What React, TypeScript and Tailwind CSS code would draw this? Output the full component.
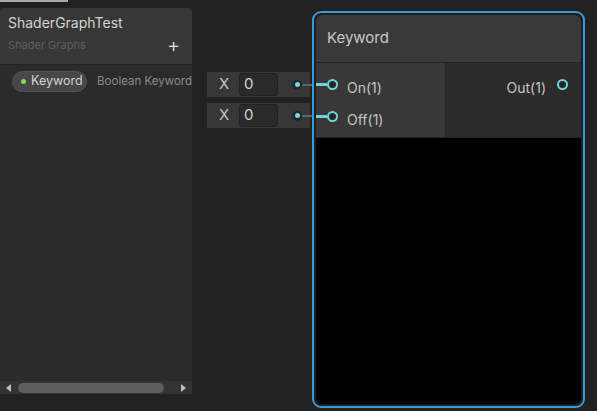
const font = { fontFamily: "Inter, 'Noto Sans', sans-serif" };

function InputRow() {
  return (
    <div className="flex items-center">
      <div className="flex h-[25px] w-[103px] items-center bg-[#373737]">
        <span className="ml-[10px] w-[14px] text-center text-[15px] text-[#c4c4c4]">X</span>
        <div className="ml-[8px] flex h-[23px] w-[39px] items-center rounded-[3px] border border-[#212121] bg-[#2a2a2a] pl-[4px] text-[15px] text-[#d2d2d2]">
          0
        </div>
        <div className="flex-1" />
        <div className="flex h-[10px] w-[10px] items-center justify-center rounded-full bg-[#262626]">
          <div className="h-[5px] w-[5px] rounded-full bg-[#6fd8e0]" />
        </div>
        <div className="h-[2px] w-[8px] bg-[#4b6b6e]" />
      </div>
      <div className="h-[2px] w-[2px] bg-[#4b6b6e]" />
    </div>
  );
}

function Port() {
  return <div className="h-[11px] w-[11px] rounded-full border-2 border-[#6fd3dc] bg-[#262626]" />;
}

function InPort({ label }: { label: string }) {
  return (
    <div className="flex h-[32px] items-center">
      <div className="mb-[5px] flex items-center">
        <div className="h-[3px] w-[11px] bg-[#6fd3dc]" />
        <Port />
      </div>
      <span className="ml-[9px] text-[14px] text-[#c4c4c4]">{label}</span>
    </div>
  );
}

export default function App() {
  return (
    <div className="flex h-[411px] w-[597px] items-start overflow-hidden bg-[#212121]" style={font}>
      <div className="flex flex-col">
        <div className="h-[2px] w-[68px] bg-[#a9a9a9]" />
        <div className="mt-[6px] flex h-[386px] w-[192px] flex-col overflow-hidden rounded-t-[4px] bg-[#2b2b2b]">
          <div className="flex h-[57px] flex-col border-b border-[#232323] bg-[#373737] px-[8px]">
            <div className="mt-[6px] text-[14px] leading-[18px] text-[#d4d4d4]">ShaderGraphTest</div>
            <div className="mt-[6px] flex items-center justify-between">
              <span className="text-[11px] leading-[14px] text-[#5f5f5f]">Shader Graphs</span>
              <span className="mr-[4px] text-[20px] font-light leading-[14px] text-[#e6e6e6]">+</span>
            </div>
          </div>
          <div className="mt-[6px] flex items-center pl-[12px]">
            <div className="flex h-[21px] w-[77px] items-center rounded-full border border-[#545454] bg-[#474747] pl-[8px]">
              <div className="h-[5px] w-[5px] rounded-full bg-[#7fd85c]" />
              <span className="ml-[5px] text-[12.5px] text-[#d2d2d2]">Keyword</span>
            </div>
            <span className="ml-[10px] whitespace-nowrap text-[11.5px] text-[#8a8a8a]">Boolean Keyword</span>
          </div>
          <div className="flex-1" />
          <div className="flex h-[13px] items-center bg-[#333333] px-[6px]">
            <div className="h-0 w-0 border-y-[4px] border-r-[5px] border-y-transparent border-r-[#bdbdbd]" />
            <div className="ml-[7px] h-[10px] w-[146px] rounded-full bg-[#5e5e5e]" />
            <div className="flex-1" />
            <div className="h-0 w-0 border-y-[4px] border-l-[5px] border-y-transparent border-l-[#bdbdbd]" />
          </div>
        </div>
      </div>

      <div className="ml-[15px] mt-[72px] flex flex-col gap-[6px]">
        <InputRow />
        <InputRow />
      </div>

      <div className="mt-[11px] h-[397px] w-[273px] rounded-[9px] border-2 border-[#3c98d8] bg-[#1f1f1f] p-[2px]">
        <div className="flex h-full flex-col overflow-hidden rounded-[6px] bg-black">
          <div className="flex h-[47px] items-center bg-[#393939] pl-[11px] text-[15px] text-[#c8c8c8]">Keyword</div>
          <div className="flex h-[76px] border-y border-[#232323]">
            <div className="w-[130px] border-r border-[#262626] bg-[#383838] pt-[8px]">
              <InPort label="On(1)" />
              <InPort label="Off(1)" />
            </div>
            <div className="flex flex-1 justify-end bg-[#2c2c2c] pr-[13px] pt-[8px]">
              <div className="flex h-[32px] items-center">
                <span className="text-[14px] text-[#c4c4c4]">Out(1)</span>
                <div className="mb-[5px] ml-[11px]">
                  <Port />
                </div>
              </div>
            </div>
          </div>
          <div className="flex-1 bg-black" />
        </div>
      </div>
    </div>
  );
}
